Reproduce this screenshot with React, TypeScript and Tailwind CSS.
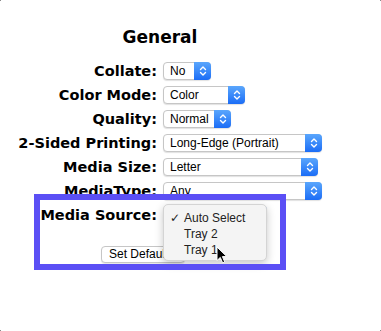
import React from "react";

function Chevrons() {
  return (
    <svg width="8" height="12" viewBox="0 0 8 12" fill="none" stroke="white" strokeWidth="1.4" strokeLinecap="round" strokeLinejoin="round">
      <path d="M1.5 4.6 L4 2.1 L6.5 4.6" />
      <path d="M1.5 7.4 L4 9.9 L6.5 7.4" />
    </svg>
  );
}

function Select({ text, w }: { text: string; w: string }) {
  return (
    <div className={`flex h-[18px] ${w} items-stretch rounded-[4px] border border-[#c6c6c6] bg-white shadow-[0_1px_1px_rgba(0,0,0,0.12)]`}>
      <span className="flex-1 truncate pl-[6px] text-[12px] leading-[16px] text-black">{text}</span>
      <span className="-my-px -mr-px flex w-[17px] items-center justify-center rounded-r-[4px] bg-gradient-to-b from-[#5aa6fc] to-[#1b6cf6]">
        <Chevrons />
      </span>
    </div>
  );
}

const rows: { label: string; text: string; w: string }[] = [
  { label: "Collate:", text: "No", w: "w-[48px]" },
  { label: "Color Mode:", text: "Color", w: "w-[82px]" },
  { label: "Quality:", text: "Normal", w: "w-[68px]" },
  { label: "2-Sided Printing:", text: "Long-Edge (Portrait)", w: "w-[159px]" },
  { label: "Media Size:", text: "Letter", w: "w-[155px]" },
  { label: "MediaType:", text: "Any", w: "w-[159px]" },
  { label: "Media Source:", text: "", w: "w-[104px]" },
];

export default function App() {
  return (
    <div className="relative h-[331px] w-[381px] overflow-hidden bg-white" style={{ fontFamily: '"Liberation Sans", Arial, sans-serif' }}>
      <div className="pt-[27px] w-[320px]">
        <h1 className="text-center text-[17px] font-bold leading-[20px] text-black" style={{ fontFamily: '"DejaVu Sans", sans-serif' }}>
          General
        </h1>
      </div>
      <div className="mt-[15px] grid grid-cols-[157px_auto] gap-x-[6px] gap-y-[6px]">
        {rows.map((r) => (
          <React.Fragment key={r.label}>
            <div className="text-right text-[14.5px] font-bold leading-[18px] text-black" style={{ fontFamily: '"DejaVu Sans", sans-serif' }}>
              {r.label}
            </div>
            <div className="flex justify-start">
              <Select text={r.text} w={r.w} />
            </div>
          </React.Fragment>
        ))}
      </div>
      <div className="mt-[22px] flex pl-[101px]">
        <div className="h-[17px] w-[84px] whitespace-nowrap rounded-[4px] border border-[#c6c6c6] bg-white pl-[7px] text-[12px] leading-[15px] text-black shadow-[0_1px_1px_rgba(0,0,0,0.1)]">
          Set Defaults
        </div>
      </div>

      {/* popup menu */}
      <div className="absolute left-[163px] top-[204px] h-[57px] w-[104px] rounded-[5px] border border-[#d4d4d4] bg-[#f4f4f4] pt-[5px] shadow-[0_3px_8px_rgba(0,0,0,0.22)]">
        <div className="flex h-[16px] items-center text-[12px] leading-[16px] text-[#222]">
          <span className="w-[20px] pl-[6px] text-[12px] font-bold" style={{ fontFamily: '"DejaVu Sans", sans-serif' }}>✓</span>
          <span>Auto Select</span>
        </div>
        <div className="h-[16px] pl-[20px] text-[12px] leading-[16px] text-[#222]">Tray 2</div>
        <div className="h-[16px] pl-[20px] text-[12px] leading-[16px] text-[#222]">Tray 1</div>
      </div>

      {/* cursor */}
      <svg className="absolute left-[216px] top-[246px]" width="12" height="18" viewBox="0 0 12 18">
        <path d="M1 1 L1 14.5 L4.3 11.4 L6.6 16.8 L8.7 15.9 L6.4 10.6 L10.8 10.6 Z" fill="black" stroke="white" strokeWidth="1" strokeLinejoin="round" />
      </svg>

      {/* annotation box */}
      <div className="pointer-events-none absolute left-[34px] top-[194px] h-[76px] w-[252px] border-[6px] border-[#5b4ff5]" />

      {/* corner marks */}
      <div className="absolute left-0 top-0 h-px w-px bg-[#8a8a8a]" />
      <div className="absolute right-0 top-0 h-px w-px bg-[#8a8a8a]" />
      <div className="absolute bottom-0 left-0 h-px w-px bg-[#8a8a8a]" />
      <div className="absolute bottom-0 right-0 h-px w-px bg-[#8a8a8a]" />
    </div>
  );
}
